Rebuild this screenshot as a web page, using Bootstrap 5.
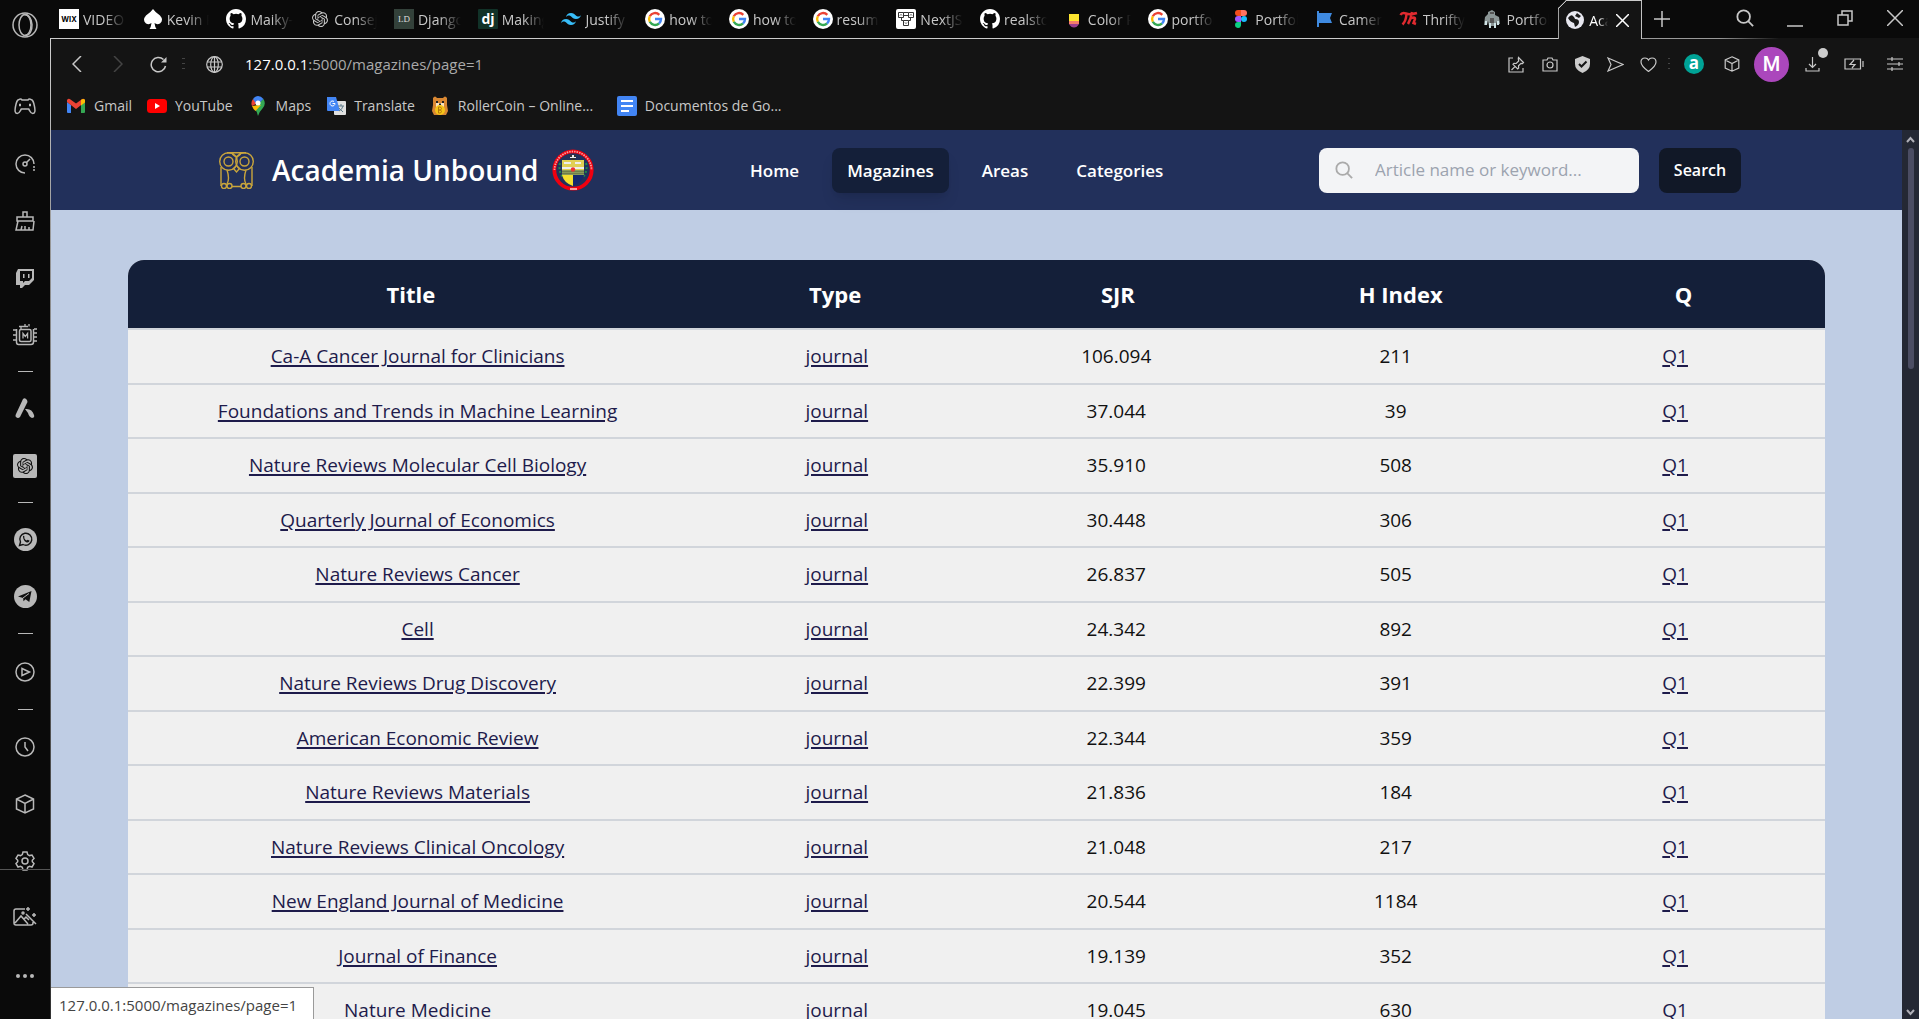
<!DOCTYPE html>
<html lang="en">
<head>
<meta charset="utf-8">
<meta name="viewport" content="width=device-width, initial-scale=1">
<title>Academia Unbound</title>
<link href="https://cdn.jsdelivr.net/npm/bootstrap@5.3.0/dist/css/bootstrap.min.css" rel="stylesheet">
<style>
body{font-family:"Open Sans","Noto Sans",sans-serif;background:#0a0a0a;color:#c8c8c8}
svg{display:block;flex:none}
.ln{fill:none;stroke:currentColor;stroke-width:1.5}
.ln.thin{stroke-width:1.2}
.plain-btn{background:none;border:0;padding:0;color:inherit;display:flex;align-items:center;justify-content:center}
.plain-btn:disabled{color:#444}
/* side panel */
.side-bar{width:50px;flex:none;color:#b8b8b8}
.side-top{flex:1 1 0;min-height:0}
.side-item{width:50px;height:57px;flex:none}
.side-item.tall{height:59px}
.side-logo{height:50px;margin-bottom:28px}
.side-sep{height:17px;flex:none;display:flex;align-items:center;justify-content:center}
.side-sep::before{content:"";width:15px;height:1px;background:#b8b8b8}
.side-bottom{border-top:1px solid #555;padding:17px 0 14px}
.side-edge{width:1px;flex:none;margin-top:38px;background:linear-gradient(#d0d0d0,#999 20%,#666 50%,#333)}
/* tabs */
.main-col{min-width:0}
.tab-strip{height:39px;flex:none}
.tabs-area{flex:1 1 0;min-width:0}
.tab-link{flex:1 1 0;min-width:0;height:39px;padding:0 9px 0 8px;gap:4px;font-size:14px;color:#c8c8c8;text-decoration:none;border-bottom:1px solid #ccc;display:flex;align-items:center}
.tab-link span{flex:1 1 0;min-width:0;overflow:hidden;white-space:nowrap;-webkit-mask-image:linear-gradient(90deg,#000 50%,transparent);mask-image:linear-gradient(90deg,#000 50%,transparent)}
.tab-current{flex:1 1 0;min-width:0;height:39px;padding:0 8px 0 7px;gap:5px;font-size:14px;color:#fff;position:relative;display:flex;align-items:center;background:#141414;border:1px solid #ccc;border-bottom:0;clip-path:polygon(0 8px,8px 0,100% 0,100% 100%,0 100%)}
.tab-current::before{content:"";position:absolute;left:-1px;top:-1px;width:9px;height:9px;background:linear-gradient(135deg,transparent 43%,#ccc 43% 55%,transparent 55%)}
.tab-current span{width:19px;overflow:hidden;white-space:nowrap;-webkit-mask-image:linear-gradient(90deg,#000 50%,transparent);mask-image:linear-gradient(90deg,#000 50%,transparent)}
.tab-more{width:78px;height:39px;flex:none;border-bottom:1px solid #999;padding-left:12px}
.win-area{flex:none;height:39px;border-bottom:1px solid;border-image:linear-gradient(90deg,#999,#141414 30%) 1}
.win-btn{width:50px;height:36px}
.win-btn:last-child{width:49px}
/* tool bar */
.tool-row{height:50px;flex:none;background:#141414;padding:0 4px 0 5px}
.t41{width:41px;height:40px;flex:none}
.t38{width:38px;height:40px;flex:none}
.t33{width:33px;height:40px;flex:none}
.t50{width:50px;height:40px;flex:none}
.dots3{width:10px;flex:none;color:#444}
.addr{padding:0 6px;color:#aaa;font-size:15px}
.addr b{font-weight:400;color:#fff}
.avatar{width:35px;height:35px;border-radius:50%;background:#ab47bc;color:#fff;font:500 20px Roboto,sans-serif;display:flex;align-items:center;justify-content:center}
.dl-dot{position:absolute;right:5px;top:4px;width:10px;height:10px;border-radius:50%;background:#ccc}
.mark-row{height:41px;flex:none;background:#141414;padding:0 15px 8px;gap:15px;font-size:14px}
.mark-row a{color:#c8c8c8;text-decoration:none;display:flex;align-items:center;gap:8px;white-space:nowrap}
.mark-row .long-mark{min-width:172px}
/* page */
.page-area{flex:1 1 0;min-height:0}
.page-view{background:#bfcde4}
.site-head{background:#22305b;height:80px;padding:0 161px 0 168px}
.brand-name{font-size:28px;font-weight:600;color:#fff;line-height:40px;margin:0 14px 0 18px}
.site-nav{gap:18px}
.site-nav a{color:#fff;font-size:17px;font-weight:600;text-decoration:none;padding:0 15px;line-height:45px;border-radius:8px}
.site-nav a.current{background:#141f39;box-shadow:0 10px 15px -3px rgba(0,0,0,.1),0 4px 6px -4px rgba(0,0,0,.1)}
.find-form{gap:20px}
.find-box{width:320px;height:45px;border-radius:8px;background:#f3f4f6;padding:0 16px;gap:22px;color:#aaa}
.find-box input{border:0;background:none;outline:0;font-size:17px;min-width:0;flex:1;color:#333;padding:0}
.find-box input::placeholder{color:#9ca3af;opacity:1}
.find-btn{width:82px;height:45px;border:0;border-radius:8px;background:#111827;color:#fff;font-size:16px;font-weight:600;padding:0}
.list-wrap{width:91.6667%;margin:50px auto 0;border-radius:16px 16px 0 0;overflow:hidden}
.mag-table{display:block;width:100%;text-align:center;font-size:19px;line-height:1.5;color:#111;background:#f0f0f0}
.mag-table thead,.mag-table tbody{display:block}
.mag-table tr{display:grid;grid-template-columns:2fr 1fr 1fr 1fr 1fr;border-bottom:2px solid #d1d5db}
.mag-table thead tr{background:#141f39;color:#fff;height:70px;align-items:center;font-size:22px}
.mag-table tbody tr{padding:12px 10px}
.mag-table th,.mag-table td{padding:0}
.mag-table th{font-weight:700}
.mag-table a{color:#1e1b4b;font-weight:500;text-decoration-thickness:2px;text-underline-offset:2px}
.scroll-rail{width:17px;flex:none;background:#242834;color:#b0b0b8;padding:5px 0 2px}
.scroll-thumb{width:6px;height:221px;border-radius:3px;background:#4b4d63;margin-top:5px}
.status-tip{position:absolute;left:0;bottom:0;height:32px;background:#fff;border:1px solid #9a9a9a;border-width:1px 1px 0 0;color:#444;font-size:15px;line-height:34px;padding:0 16px 0 8px}
</style>
<script src="https://cdn.jsdelivr.net/npm/bootstrap@5.3.0/dist/js/bootstrap.bundle.min.js"></script>
</head>
<body class="vh-100 d-flex overflow-hidden">
<svg width="0" height="0" class="position-absolute" aria-hidden="true">
<symbol id="github" viewBox="0 0 16 16"><path fill="#fff" d="M8 0C3.58 0 0 3.58 0 8c0 3.54 2.29 6.53 5.47 7.59.4.07.55-.17.55-.38 0-.19-.01-.82-.01-1.49-2.01.37-2.53-.49-2.69-.94-.09-.23-.48-.94-.82-1.13-.28-.15-.68-.52-.01-.53.63-.01 1.08.58 1.23.82.72 1.21 1.87.87 2.33.66.07-.52.28-.87.51-1.07-1.78-.2-3.64-.89-3.64-3.95 0-.87.31-1.59.82-2.15-.08-.2-.36-1.02.08-2.12 0 0 .67-.21 2.2.82a7.6 7.6 0 0 1 4 0c1.53-1.04 2.2-.82 2.2-.82.44 1.1.16 1.92.08 2.12.51.56.82 1.27.82 2.15 0 3.07-1.87 3.75-3.65 3.95.29.25.54.73.54 1.48 0 1.07-.01 1.93-.01 2.2 0 .21.15.46.55.38A8 8 0 0 0 16 8c0-4.42-3.58-8-8-8"/></symbol>
<symbol id="google" viewBox="0 0 20 20"><circle cx="10" cy="10" r="10" fill="#fff"/><g fill="none" stroke-width="2.4"><path stroke="#ea4335" d="M4.8 7.2A6 6 0 0 1 14.3 5.8"/><path stroke="#fbbc05" d="M4.8 7.2A6 6 0 0 0 4.8 12.8"/><path stroke="#34a853" d="M4.8 12.8A6 6 0 0 0 14 14.5"/><path stroke="#4285f4" d="M10 10h6A6 6 0 0 1 14 14.5"/></g></symbol>
<symbol id="gpt" viewBox="0 0 24 24"><path fill="currentColor" d="M22.2819 9.8211a5.9847 5.9847 0 0 0-.5157-4.9108 6.0462 6.0462 0 0 0-6.5098-2.9A6.0651 6.0651 0 0 0 4.9807 4.1818a5.9847 5.9847 0 0 0-3.9977 2.9 6.0462 6.0462 0 0 0 .7427 7.0966 5.98 5.98 0 0 0 .511 4.9107 6.051 6.051 0 0 0 6.5146 2.9001A5.9847 5.9847 0 0 0 13.2599 24a6.0557 6.0557 0 0 0 5.7718-4.2058 5.9894 5.9894 0 0 0 3.9977-2.9001 6.0557 6.0557 0 0 0-.7475-7.0729zm-9.022 12.6081a4.4755 4.4755 0 0 1-2.8764-1.0408l.1419-.0804 4.7783-2.7582a.7948.7948 0 0 0 .3927-.6813v-6.7369l2.02 1.1686a.071.071 0 0 1 .038.052v5.5826a4.504 4.504 0 0 1-4.4945 4.4944zm-9.6607-4.1254a4.4708 4.4708 0 0 1-.5346-3.0137l.142.0852 4.783 2.7582a.7712.7712 0 0 0 .7806 0l5.8428-3.3685v2.3324a.0804.0804 0 0 1-.0332.0615L9.74 19.9502a4.4992 4.4992 0 0 1-6.1408-1.6464zM2.3408 7.8956a4.485 4.485 0 0 1 2.3655-1.9728V11.6a.7664.7664 0 0 0 .3879.6765l5.8144 3.3543-2.0201 1.1685a.0757.0757 0 0 1-.071 0l-4.8303-2.7865A4.504 4.504 0 0 1 2.3408 7.872zm16.5963 3.8558L13.1038 8.364 15.1192 7.2a.0757.0757 0 0 1 .071 0l4.8303 2.7913a4.4944 4.4944 0 0 1-.6765 8.1042v-5.6772a.79.79 0 0 0-.407-.667zm2.0107-3.0231l-.142-.0852-4.7735-2.7818a.7759.7759 0 0 0-.7854 0L9.409 9.2297V6.8974a.0662.0662 0 0 1 .0284-.0615l4.8303-2.7866a4.4992 4.4992 0 0 1 6.6802 4.66zM8.3065 12.863l-2.02-1.1638a.0804.0804 0 0 1-.038-.0567V6.0742a4.4992 4.4992 0 0 1 7.3757-3.4537l-.142.0805L8.704 5.459a.7948.7948 0 0 0-.3927.6813zm1.0976-2.3654l2.602-1.4998 2.6069 1.4998v2.9994l-2.5974 1.4997-2.6067-1.4997Z"/></symbol>
<symbol id="cube" viewBox="0 0 20 20"><path class="ln" d="M10 1l8.500 4v10L10 19l-8.500-4V5zM1.500 5L10 9.500 18.500 5M10 9.500V19"/></symbol>
<symbol id="lens" viewBox="0 0 20 20"><g fill="none" stroke="currentColor" stroke-width="2"><circle cx="8.500" cy="8.500" r="7"/><path d="M13.500 13.500l5.500 5.500"/></g></symbol>
</svg>

<aside class="side-bar d-flex flex-column">
 <div class="side-top">
  <button class="plain-btn side-item side-logo" aria-label="Opera menu"><svg width="26" height="26" viewBox="0 0 26 26" class="ln"><circle cx="13" cy="13" r="12"/><ellipse cx="13" cy="13" rx="6" ry="10.500"/><path d="M12 2.500c10-1 11 21 1 21"/></svg></button>
  <button class="plain-btn side-item" aria-label="Gaming"><svg width="22" height="17" viewBox="0 0 22 17" class="ln"><path d="M5 1.500Q7 .5 8 2h6q1-1.500 3-.5c2 .5 2.500 2 3.500 7s.3 7-1.800 7c-2 0-2.500-2-4-4.500H7.300c-1.500 2.500-2 4.500-4 4.500-2.100 0-2.800-2-1.800-7S3 2 5 1.500z"/><path d="M5 7h2M15 7h2" stroke-width="2.500"/></svg></button>
  <button class="plain-btn side-item" aria-label="Limiter"><svg width="20" height="20" viewBox="0 0 20 20" class="ln"><path d="M10 19A9 9 0 1 1 19 10"/><circle cx="10" cy="10" r="2"/><path d="M11.500 8.500L15 5M19 12v2M19 15v2"/></svg></button>
  <button class="plain-btn side-item" aria-label="Cleaner"><svg width="20" height="20" viewBox="0 0 20 20" class="ln"><path d="M2 6h16v4H2zM8 6V1h4v5M3 10L1 19h17l1-9M6 19l1-4M10 19v-4M14 19v-3"/></svg></button>
  <button class="plain-btn side-item" aria-label="Twitch"><svg width="20" height="20" viewBox="0 0 20 20"><path fill="currentColor" fill-rule="evenodd" d="M3 1h16v11l-5 5h-4l-3 3H5v-3H1V5zM5 3v10h3v2l2-2h4l3-3V3zM8 6h1.500v4H8zm5 0h1.500v4H13z"/></svg></button>
  <button class="plain-btn side-item" aria-label="Mods"><svg width="24" height="24" viewBox="0 0 24 24" class="ln"><path d="M6 3.500h9M20.500 6v13q0 2.500-2.500 2.500H5.500Q3.500 21.500 3.500 19V6"/><rect x="6.500" y="6.500" width="11.500" height="12" rx="1.500"/><path d="M10 15.500v-5l2.300 3 2.300-3v5M12 3.500V1m4 2.500V1M8 6V3.500M0 7h3.500M0 12h3M0 17h3m18-11h3m-3 4h3m-3 4h3m-3 4h3" stroke-width="1.300"/></svg></button>
  <div class="side-sep"></div>
  <button class="plain-btn side-item" aria-label="Aria"><svg width="20" height="21" viewBox="0 0 20 21" fill="currentColor"><path d="M8 1q2-2 4 1l.5 2L5 19q-2 2-4 0-1-1 0-3zM10 11q7-1 9 6 1 3-2 3-3-1-4-5z"/></svg></button>
  <button class="plain-btn side-item" aria-label="ChatGPT"><svg width="24" height="24" viewBox="0 0 24 24"><rect width="24" height="24" rx="2" fill="#b8b8b8"/><use href="#gpt" x="4" y="4" width="16" height="16" color="#111"/></svg></button>
  <div class="side-sep"></div>
  <button class="plain-btn side-item" aria-label="WhatsApp"><svg width="23" height="23" viewBox="0 0 23 23"><circle cx="11.500" cy="11.500" r="11.500" fill="#b8b8b8"/><path d="M5.500 17.500l1-3.500a6 6 0 1 1 2.500 2.500z" fill="none" stroke="#111" stroke-width="1.400"/><path d="M9 8q1-1 1.500 1l-.3 1q1 2 2.500 2.500l1-.8 2 1q-1 2.500-3.500 1.500Q9 12.500 9 8z" fill="#111"/></svg></button>
  <button class="plain-btn side-item" aria-label="Telegram"><svg width="23" height="23" viewBox="0 0 23 23"><circle cx="11.500" cy="11.500" r="11.500" fill="#b8b8b8"/><path d="M4 11.500L17.500 6l-2.200 11-3.800-2.800-2 2-.4-3.300z" fill="#111"/><path d="M9 13l6-4.500" stroke="#b8b8b8"/></svg></button>
  <div class="side-sep"></div>
  <button class="plain-btn side-item tall" aria-label="Player"><svg width="20" height="20" viewBox="0 0 20 20" class="ln"><circle cx="10" cy="10" r="9"/><path d="M7 6.500l7.500 3.500L7 13.500z"/></svg></button>
  <div class="side-sep"></div>
  <button class="plain-btn side-item" aria-label="History"><svg width="20" height="20" viewBox="0 0 20 20" class="ln"><circle cx="10" cy="10" r="9"/><path d="M10 5v5l3 4"/></svg></button>
  <button class="plain-btn side-item" aria-label="Extensions"><svg width="20" height="20"><use href="#cube"/></svg></button>
  <button class="plain-btn side-item" aria-label="Settings"><svg width="20" height="20" viewBox="0 0 20 20" class="ln"><circle cx="10" cy="10" r="3"/><path d="M8 1h4l.7 2.600 1.800 1L17 4l2 3.400L17.300 9.200v1.600L19 12.600 17 16l-2.500-.7-1.800 1L12 19H8l-.7-2.700-1.800-1L3 16l-2-3.400 1.700-1.800V9.200L1 7.400 3 4l2.500.6 1.800-1z"/></svg></button>
 </div>
 <div class="side-bottom">
  <button class="plain-btn side-item tall" aria-label="Wallpaper"><svg width="24" height="20" viewBox="0 0 24 20" class="ln"><path d="M12 2H3Q1 2 1 4v12q0 2 2 2h15q2 0 2-2v-1M2 16l6-7 7 8M11 12l2-2 3 3M13 7l10 10M15 0v4m-2-2h4M21 6v4m-2-2h4"/><circle cx="10" cy="6" r="1"/></svg></button>
  <button class="plain-btn side-item tall" aria-label="More"><svg width="18" height="4" viewBox="0 0 18 4" fill="currentColor"><circle cx="2" cy="2" r="2"/><circle cx="9" cy="2" r="2"/><circle cx="16" cy="2" r="2"/></svg></button>
 </div>
</aside>
<div class="side-edge"></div>

<div class="main-col flex-grow-1 d-flex flex-column">
 <div class="tab-strip d-flex">
  <nav class="tabs-area d-flex" aria-label="Tabs">
   <a class="tab-link" href="#"><svg width="20" height="20" viewBox="0 0 20 20"><rect width="20" height="20" fill="#fff"/><text x="10" y="12.500" font-size="7.500" font-weight="700" font-family="Inter,sans-serif" text-anchor="middle">WIX</text></svg><span>VIDEO</span></a>
   <a class="tab-link" href="#"><svg width="20" height="20" viewBox="0 0 20 20"><path fill="#fff" d="M10 0q2 3 7 6.500Q21 11 17 14.500q-3 1.500-5.500-.5.500 4 2 6h-7q1.500-2 2-6-2.500 2-5.500.5Q-1 11 3 6.500 8 3 10 0z"/></svg><span>Kevin P</span></a>
   <a class="tab-link" href="#"><svg width="20" height="20"><use href="#github"/></svg><span>Maiky-</span></a>
   <a class="tab-link" href="#"><svg width="20" height="20"><use href="#gpt" x="2" y="2" width="16" height="16"/></svg><span>Consej</span></a>
   <a class="tab-link" href="#"><svg width="20" height="20" viewBox="0 0 20 20"><rect width="20" height="20" fill="#33413a"/><text x="10" y="13" font-size="9" font-family="Liberation Serif,serif" fill="#ddd" text-anchor="middle">LD</text></svg><span>Django</span></a>
   <a class="tab-link" href="#"><svg width="20" height="20" viewBox="0 0 20 20"><rect width="20" height="20" rx="1" fill="#113228"/><text x="10" y="14.500" font-size="14" font-weight="700" font-family="Open Sans,sans-serif" fill="#fff" text-anchor="middle">dj</text></svg><span>Making</span></a>
   <a class="tab-link" href="#"><svg width="20" height="20" viewBox="0 0 24 24"><path fill="#38bdf8" d="M12.001 4.800c-3.200 0-5.200 1.600-6 4.800 1.200-1.600 2.600-2.200 4.200-1.800.913.228 1.565.89 2.288 1.624C13.666 10.618 15.027 12 18.001 12c3.200 0 5.200-1.600 6-4.800-1.200 1.600-2.600 2.200-4.200 1.800-.913-.228-1.565-.89-2.288-1.624C16.337 6.182 14.976 4.800 12.001 4.800zm-6 7.200c-3.200 0-5.200 1.600-6 4.800 1.200-1.600 2.600-2.200 4.200-1.800.913.228 1.565.89 2.288 1.624 1.177 1.194 2.538 2.576 5.512 2.576 3.200 0 5.200-1.600 6-4.800-1.200 1.600-2.600 2.200-4.200 1.800-.913-.228-1.565-.89-2.288-1.624C10.337 13.382 8.976 12 6.001 12z"/></svg><span>Justify</span></a>
   <a class="tab-link" href="#"><svg width="20" height="20"><use href="#google"/></svg><span>how to</span></a>
   <a class="tab-link" href="#"><svg width="20" height="20"><use href="#google"/></svg><span>how to</span></a>
   <a class="tab-link" href="#"><svg width="20" height="20"><use href="#google"/></svg><span>resume</span></a>
   <a class="tab-link" href="#"><svg width="20" height="20" viewBox="0 0 20 20"><rect width="20" height="20" rx="2" fill="#fff"/><path d="M2.500 3.500h5v5h-5zM12.500 3.500h5v5h-5zM7.500 11.500h5v5h-5zM7.500 3.500h5M7.500 6.500h5M5.500 8.500v3h2m7-3v3h-2M4 6.500l1-1 1 1m8 0l1-1 1 1m-7 7l1 1 1-1" fill="none" stroke="#333"/></svg><span>NextJS</span></a>
   <a class="tab-link" href="#"><svg width="20" height="20"><use href="#github"/></svg><span>realstor</span></a>
   <a class="tab-link" href="#"><svg width="20" height="20" viewBox="0 0 20 20"><path fill="#fde52f" d="M5 5h10v8H5z"/><path fill="#f57c6c" d="M5 12h10v3H5z"/><path fill="#9a3f8f" d="M5 15h10q-2 3.500-5 3.500T5 15z"/></svg><span>Color P</span></a>
   <a class="tab-link" href="#"><svg width="20" height="20"><use href="#google"/></svg><span>portfoli</span></a>
   <a class="tab-link" href="#"><svg width="20" height="20" viewBox="0 0 20 20"><path fill="#f24e1e" d="M10 1H7a3 3 0 0 0 0 6h3z"/><path fill="#ff7262" d="M10 1h3a3 3 0 0 1 0 6h-3z"/><path fill="#a259ff" d="M10 7H7a3 3 0 0 0 0 6h3z"/><circle cx="13" cy="10" r="3" fill="#1abcfe"/><path fill="#0acf83" d="M7 13h3v3.500a3 3 0 1 1-3-3.500z"/></svg><span>Portfoli</span></a>
   <a class="tab-link" href="#"><svg width="20" height="20" viewBox="0 0 20 20"><path fill="#3f8ae0" d="M2 2h2v2h13l-2 5 2 5H4v4H2z"/></svg><span>Camera</span></a>
   <a class="tab-link" href="#"><svg width="20" height="20" viewBox="0 0 20 20"><path d="M1.500 6Q3 3 7 4.500t11-.5M7.500 5Q7 12 3.500 15.500M13 3q-1 7-4 12M11 10q5-3 5 0l-1.500 4 2.500 1" fill="none" stroke="#e02a2f" stroke-width="2.500"/></svg><span>Thrifty</span></a>
   <a class="tab-link" href="#"><svg width="20" height="20" viewBox="0 0 20 20"><path fill="#8b9696" d="M6 5V3l4-2 3 2v3l4 2 1 7h-3v-3l-1 5H7L6 12l-1 4H2l1-8z"/><path fill="#cfe3e6" d="M3 12h2v4H3zM15 12h2v4h-2zM7 14h2v5H7zM12 14h2v5h-2z"/><path fill="#555" d="M8 3h4v2H8zM8 9h4v5H8z"/></svg><span>Portfoli</span></a>
   <div class="tab-current" aria-current="page"><svg width="18" height="18" viewBox="0 0 18 18"><circle cx="9" cy="9" r="9" fill="#e8e8f0"/><path d="M2 7q3-4 5-2t2 3q4 0 4 3 0 3-4 5l-1-4q-4-1-6-5zM11 2l4 3-2 2-4-2z" fill="#1a1a1a"/></svg><span>Academia</span><button class="plain-btn ms-auto me-1" aria-label="Close tab"><svg width="13" height="13" viewBox="0 0 13 13" class="ln"><path d="M0 0l13 13M13 0L0 13"/></svg></button></div>
  </nav>
  <button class="plain-btn tab-more justify-content-start" aria-label="New tab"><svg width="16" height="16" viewBox="0 0 16 16"><path class="ln" d="M8 0v16M0 8h16"/></svg></button>
  <div class="win-area d-flex">
   <button class="plain-btn win-btn" aria-label="Search tabs"><svg width="18" height="18"><use href="#lens"/></svg></button>
   <button class="plain-btn win-btn" aria-label="Minimize"><svg width="16" height="18" viewBox="0 0 16 18"><path class="ln" d="M0 17h16"/></svg></button>
   <button class="plain-btn win-btn" aria-label="Restore"><svg width="16" height="16" viewBox="0 0 16 16" class="ln"><path d="M1 5h10v10H1zM5 5V1h10v10h-4"/></svg></button>
   <button class="plain-btn win-btn" aria-label="Close window"><svg width="16" height="16" viewBox="0 0 16 16" class="ln"><path d="M0 0l16 16M16 0L0 16"/></svg></button>
  </div>
 </div>

 <div class="tool-row d-flex align-items-center">
  <button class="plain-btn t41" aria-label="Back"><svg width="10" height="16" viewBox="0 0 10 16" class="ln"><path d="M9 0L1 8l8 8"/></svg></button>
  <button class="plain-btn t41" aria-label="Forward" disabled><svg width="10" height="16" viewBox="0 0 10 16" class="ln"><path d="M1 0l8 8-8 8"/></svg></button>
  <button class="plain-btn t41" aria-label="Reload"><svg width="17" height="17" viewBox="0 0 17 17" class="ln"><path d="M13.500 3.500A7.200 7.200 0 1 0 15.500 10"/><path fill="currentColor" stroke="none" d="M16.500 1v5.500H11z"/></svg></button>
  <svg class="dots3" width="10" height="14" viewBox="0 0 10 14" fill="currentColor"><path d="M3 1h3v1H3zM3 6h3v1H3zM3 11h3v1H3z"/></svg>
  <button class="plain-btn t50" aria-label="Site information"><svg width="17" height="17" viewBox="0 0 17 17" class="ln thin"><circle cx="8.500" cy="8.500" r="7.800"/><ellipse cx="8.500" cy="8.500" rx="3.800" ry="7.800"/><path d="M8.500 1v15M1 6h15M1 11h15"/></svg></button>
  <div class="addr flex-grow-1"><b>127.0.0.1</b>:5000/magazines/page=1</div>
  <button class="plain-btn t33" aria-label="Pin"><svg width="17" height="17" viewBox="0 0 17 17" class="ln thin"><path d="M5 2H1v14h14v-4M10.500 1.500l5 5-1 1-1.500-.2-2.500 2.500.2 2.200-1 1L5 8.300l1-1 2.200.2 2.500-2.500-.4-2.300zM7.200 10.300L3.500 14"/></svg></button>
  <button class="plain-btn t33" aria-label="Snapshot"><svg width="16" height="15" viewBox="0 0 16 15" class="ln thin"><path d="M1 3h4l1-2h4l1 2h4v11H1z"/><circle cx="8" cy="8" r="3"/></svg></button>
  <button class="plain-btn t33" aria-label="Blocker"><svg width="15" height="17" viewBox="0 0 15 17"><path fill="#ccc" d="M7.500 0L15 3v5q0 6-7.500 9Q0 14 0 8V3z"/><path d="M4 8l2.500 2.500 5-5" fill="none" stroke="#141414" stroke-width="2"/></svg></button>
  <button class="plain-btn t33" aria-label="Send"><svg width="17" height="15" viewBox="0 0 17 15" class="ln thin"><path d="M1 1l15 6.500L1 14l3-6.500z"/></svg></button>
  <button class="plain-btn t33" aria-label="Bookmark"><svg width="17" height="15" viewBox="0 0 17 15" class="ln thin"><path d="M8.500 14.500Q1 9 1 5t4-4q2.500 0 3.500 2Q9.500 1 12 1q4 0 4 4t-7.500 9.500z"/></svg></button>
  <svg class="dots3" width="10" height="14" viewBox="0 0 10 14" fill="currentColor"><path d="M3 1h2v1H3zM3 6h2v1H3zM3 11h2v1H3z"/></svg>
  <button class="plain-btn t38" aria-label="Alexa extension"><svg width="20" height="20" viewBox="0 0 20 20"><circle cx="10" cy="10" r="10" fill="#00a396"/><text x="10" y="15" font-size="17" font-weight="700" font-family="Open Sans,sans-serif" fill="#fff" text-anchor="middle">a</text></svg></button>
  <button class="plain-btn t38" aria-label="Extensions"><svg width="16" height="16"><use href="#cube"/></svg></button>
  <button class="plain-btn t41" aria-label="Profile"><span class="avatar">M</span></button>
  <button class="plain-btn t41 position-relative" aria-label="Downloads"><svg width="15" height="15" viewBox="0 0 15 15" class="ln thin"><path d="M7.500 0v10M4 7l3.500 3.500L11 7M1 11v3h13v-3"/></svg><span class="dl-dot"></span></button>
  <button class="plain-btn t41" aria-label="Battery"><svg width="20" height="12" viewBox="0 0 20 12" class="ln thin"><path d="M1 1h15.500v10H1zM19 3v6M10 2L6 6.500h5L8 10"/></svg></button>
  <button class="plain-btn t41" aria-label="Easy setup"><svg width="16" height="14" viewBox="0 0 16 14" class="ln thin"><path d="M0 2h16M0 7h16M0 12h16M5 0v4M12 5v4M5 10v4"/></svg></button>
 </div>

 <nav class="mark-row d-flex align-items-center" aria-label="Bookmarks">
  <a href="#"><svg width="20" height="20" viewBox="0 0 20 20"><path fill="#4285f4" d="M1 6l4 3v8H2q-1 0-1-1z"/><path fill="#34a853" d="M15 9l4-3v10q0 1-1 1h-3z"/><path fill="#ea4335" d="M1 6V4q1.500-2 3.500-.5L10 7.500l5.500-4Q17.500 2 19 4v2l-9 7z"/><path fill="#fbbc05" d="M15 4l1-.7q2-1 3 .7v2.500L15 9.500z"/></svg>Gmail</a>
  <a href="#"><svg width="20" height="20" viewBox="0 0 20 20"><rect y="3" width="20" height="14" rx="3.500" fill="#f00"/><path fill="#fff" d="M8 7l5 3-5 3z"/></svg>YouTube</a>
  <a href="#"><svg width="20" height="20" viewBox="0 0 20 20"><path fill="#34a853" d="M10 20Q9 15 5.500 11.500L15.500 3q3 5-1 9.500Q11 16 10 20z"/><path fill="#fbbc05" d="M4 10l9-1-5.500 6q-2.500-2-3.500-5z"/><path fill="#ea4335" d="M4 10Q2.500 6 5 3l5 4z"/><path fill="#4285f4" d="M5 3q2-3 5-3t5.500 3L9 9z"/><circle cx="10" cy="7" r="2.500" fill="#fff"/></svg>Maps</a>
  <a href="#"><svg width="20" height="20" viewBox="0 0 20 20"><rect x="8" y="5" width="12" height="14" rx="1" fill="#e0e0e0"/><path fill="#4285f4" d="M1 1h9l4 14H2q-1 0-1-1z"/><path d="M9 7.500H6.500M9 7.500A2.500 2.500 0 1 1 8 5.500" fill="none" stroke="#fff"/><path d="M12 10h6M15 8v2m2 0q-1 4-4 5m0-3l4 4" fill="none" stroke="#607d8b"/></svg>Translate</a>
  <a class="long-mark" href="#"><svg width="20" height="20" viewBox="0 0 20 20"><path fill="#d98732" d="M3 2q2-3 4 0h6q2-3 4 0v7l1 6-2 4H4l-2-4 1-6z"/><path fill="#f8e3c0" d="M6 7h8v4H6z"/><circle cx="10" cy="14" r="5" fill="#f5c518"/><path d="M8.500 11h2q2 1.500 0 3h-2zm0 3h2q2 1.500 0 3h-2z" fill="none" stroke="#b5780a"/><path fill="#222" d="M6 5h2v2H6zM12 5h2v2h-2zM9 7.500h2V9H9z"/></svg>RollerCoin – Online...</a>
  <a href="#"><svg width="20" height="20" viewBox="0 0 20 20"><rect width="20" height="20" rx="2" fill="#4285f4"/><path stroke="#fff" stroke-width="2" d="M4 5h12M4 10h12M4 15h8"/></svg>Documentos de Go...</a>
 </nav>

 <div class="page-area d-flex position-relative overflow-hidden">
  <main class="page-view flex-grow-1 overflow-hidden">
   <header class="site-head d-flex align-items-center justify-content-between">
    <div class="d-flex align-items-center">
     <svg width="35" height="38" viewBox="0 0 35 38" fill="none" stroke="#c9a53c" stroke-width="1.400"><circle cx="9.500" cy="10.500" r="8.800"/><circle cx="25.500" cy="10.500" r="8.800"/><circle cx="9.500" cy="10.500" r="4.500"/><circle cx="25.500" cy="10.500" r="4.500"/><path d="M8 1.700h19M13 2q4.500 7 9 0M17.500 14.500l3 3-3 3.500-3-3.500zM2 16v19M33 16v19M8 19q3 9 0 14M27 19q-3 9 0 14M13 35.500h9"/><circle cx="5" cy="35" r="2.500"/><circle cx="10.500" cy="35" r="2.500"/><circle cx="24.500" cy="35" r="2.500"/><circle cx="30" cy="35" r="2.500"/></svg>
     <span class="brand-name">Academia Unbound</span>
     <svg width="42" height="42" viewBox="0 0 42 42"><circle cx="21" cy="21" r="18.700" fill="#22305b" stroke="#f0000f" stroke-width="3.800"/><path d="M2.500 21a18.500 18.500 0 0 1 37 0" fill="none" stroke="#f7a0a0" stroke-width="1.800" stroke-dasharray="1.500 1"/><path d="M8 14q-2 8 3 14M34 14q2 8-3 14" fill="none" stroke="#1f8a4a" stroke-width="2" stroke-dasharray="2 2"/><path fill="#e0cf55" d="M10 11h22v11H10z"/><path fill="#8a9a5a" d="M10 21h22v5H10z"/><path fill="#f5e02e" d="M10 26h11v11q-9-3-11-11z"/><path fill="#15296d" d="M21 26h11q-2 8-11 11z"/><path fill="#eee" d="M12 13h7v2h-7zM23 13h6v2h-6zM18 6h6v3h-6zM10 18h22v2H10z"/><path fill="#333" d="M18 6h2v2h-2zM22 6h2v2h-2zM19 9h4v2h-4z"/><path stroke="#6f7d4a" d="M10 22.500h22M10 24.500h22"/><circle cx="21" cy="20.500" r="2.200" fill="#e33"/><path stroke="#ffd0d0" stroke-width="1.500" d="M18 40h7"/></svg>
    </div>
    <nav class="site-nav d-flex" aria-label="Main"><a href="#">Home</a><a href="#" class="current" aria-current="page">Magazines</a><a href="#">Areas</a><a href="#">Categories</a></nav>
    <form class="find-form d-flex" onsubmit="return false">
     <label class="find-box d-flex align-items-center"><svg width="18" height="18"><use href="#lens"/></svg><input type="text" aria-label="Search articles" placeholder="Article name or keyword..."></label>
     <button class="find-btn">Search</button>
    </form>
   </header>
   <div class="list-wrap">
    <table class="mag-table">
     <thead><tr><th>Title</th><th>Type</th><th>SJR</th><th>H Index</th><th>Q</th></tr></thead>
     <tbody>
      <tr><td><a href="#">Ca-A Cancer Journal for Clinicians</a></td><td><a href="#">journal</a></td><td>106.094</td><td>211</td><td><a href="#">Q1</a></td></tr>
      <tr><td><a href="#">Foundations and Trends in Machine Learning</a></td><td><a href="#">journal</a></td><td>37.044</td><td>39</td><td><a href="#">Q1</a></td></tr>
      <tr><td><a href="#">Nature Reviews Molecular Cell Biology</a></td><td><a href="#">journal</a></td><td>35.910</td><td>508</td><td><a href="#">Q1</a></td></tr>
      <tr><td><a href="#">Quarterly Journal of Economics</a></td><td><a href="#">journal</a></td><td>30.448</td><td>306</td><td><a href="#">Q1</a></td></tr>
      <tr><td><a href="#">Nature Reviews Cancer</a></td><td><a href="#">journal</a></td><td>26.837</td><td>505</td><td><a href="#">Q1</a></td></tr>
      <tr><td><a href="#">Cell</a></td><td><a href="#">journal</a></td><td>24.342</td><td>892</td><td><a href="#">Q1</a></td></tr>
      <tr><td><a href="#">Nature Reviews Drug Discovery</a></td><td><a href="#">journal</a></td><td>22.399</td><td>391</td><td><a href="#">Q1</a></td></tr>
      <tr><td><a href="#">American Economic Review</a></td><td><a href="#">journal</a></td><td>22.344</td><td>359</td><td><a href="#">Q1</a></td></tr>
      <tr><td><a href="#">Nature Reviews Materials</a></td><td><a href="#">journal</a></td><td>21.836</td><td>184</td><td><a href="#">Q1</a></td></tr>
      <tr><td><a href="#">Nature Reviews Clinical Oncology</a></td><td><a href="#">journal</a></td><td>21.048</td><td>217</td><td><a href="#">Q1</a></td></tr>
      <tr><td><a href="#">New England Journal of Medicine</a></td><td><a href="#">journal</a></td><td>20.544</td><td>1184</td><td><a href="#">Q1</a></td></tr>
      <tr><td><a href="#">Journal of Finance</a></td><td><a href="#">journal</a></td><td>19.139</td><td>352</td><td><a href="#">Q1</a></td></tr>
      <tr><td><a href="#">Nature Medicine</a></td><td><a href="#">journal</a></td><td>19.045</td><td>630</td><td><a href="#">Q1</a></td></tr>
     </tbody>
    </table>
   </div>
  </main>
  <div class="scroll-rail d-flex flex-column align-items-center" aria-hidden="true">
   <svg width="9" height="8" viewBox="0 0 9 8"><path d="M1 7l3.500-4L8 7" fill="none" stroke="currentColor" stroke-width="2"/></svg>
   <div class="scroll-thumb"></div>
   <svg class="mt-auto" width="9" height="8" viewBox="0 0 9 8"><path d="M1 1l3.500 4L8 1" fill="none" stroke="currentColor" stroke-width="2"/></svg>
  </div>
  <div class="status-tip">127.0.0.1:5000/magazines/page=1</div>
 </div>
</div>
</body>
</html>
